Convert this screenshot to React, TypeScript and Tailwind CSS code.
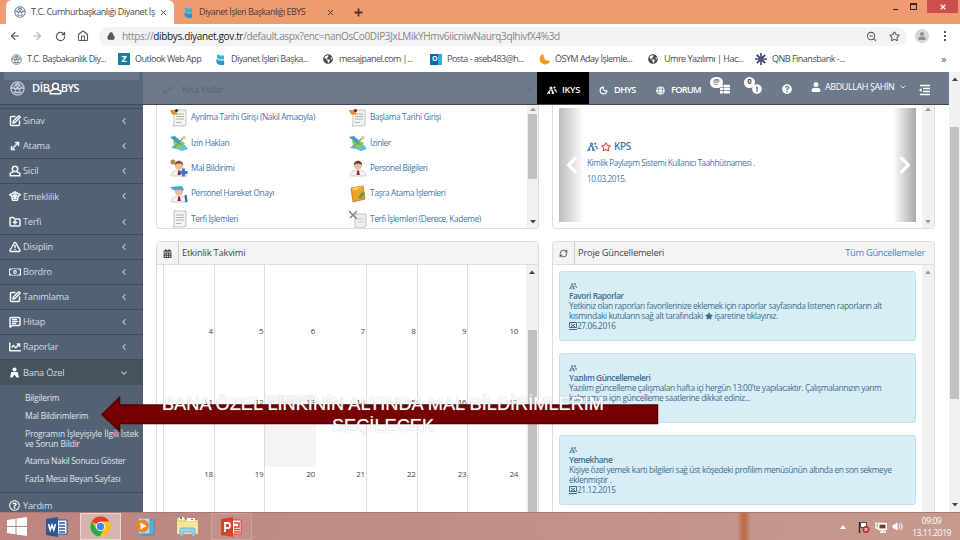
import type { ReactNode } from 'react';
import {
  ArrowLeft, ArrowRight, ChevronDown, ChevronLeft, FolderUp, House, Lock, MessageSquareText,
  Moon, MoveDiagonal, RefreshCw, RotateCw, SquarePen, Star, TriangleAlert, X, ZoomOut,
} from 'lucide-react';
import {
  FaCalendarAlt, FaChartLine, FaChevronLeft, FaChevronRight, FaExclamationCircle, FaGlobe,
  FaGlobeAmericas, FaQuestionCircle, FaRegMoneyBillAlt, FaRegQuestionCircle, FaStar, FaThList, FaUser,
} from 'react-icons/fa';

const line = { size: 12, strokeWidth: 3 };

/* ---------- icons ---------- */

function Emblem({ className = 'text-[#6d7f97]', size = 12 }: { className?: string; size?: number }) {
  return (
    <svg width={size} height={size} viewBox="0 0 24 24" fill="none" stroke="currentColor" className={`shrink-0 ${className}`}>
      <circle cx="12" cy="12" r="10.5" strokeWidth="2" />
      <path d="M2 11h5l2 3 3-4 3 4 2-3h5M6 17c3 2 9 2 12 0M8 7l4-3 4 3" strokeWidth="2.4" />
      <path d="M5 8h14" strokeWidth="1.5" />
    </svg>
  );
}

function Flag() {
  return (
    <svg width="9" height="11" viewBox="0 0 9 11" className="shrink-0">
      <path d="M1 0l2.6 1.6H8v3.8H3.6L1 4z" fill="#2fb4dc" />
      <path d="M0.5 5l3 1.4h4.6V11H3.5L0.5 9z" fill="#2796c9" />
    </svg>
  );
}

function People({ size = 10 }: { size?: number }) {
  return (
    <svg width={size} height={size} viewBox="0 0 20 20" fill="none" stroke="currentColor" strokeWidth="2.2" className="shrink-0">
      <circle cx="8" cy="6" r="2" />
      <path d="M1 18l5-8h4l4 8M5 14v4M10 11l1 7M15 3v4M13 5h4M14 10h3l2 5" />
    </svg>
  );
}

function Bust({ size = 12 }: { size?: number }) {
  return (
    <svg width={size} height={size} viewBox="0 0 20 20" fill="none" stroke="currentColor" strokeWidth="2.5">
      <circle cx="10" cy="6.5" r="4.5" />
      <path d="M7 11l-5 3v4h16v-4l-5-3" />
    </svg>
  );
}

function Person() {
  return (
    <svg width="11" height="11" viewBox="0 0 20 20" fill="currentColor">
      <circle cx="10" cy="4.5" r="3.7" />
      <path d="M4 9h12l2 10h-4l-4-5-4 5H2z" />
    </svg>
  );
}

function Basket() {
  return (
    <svg width="12" height="12" viewBox="0 0 20 20" fill="none" stroke="currentColor" strokeWidth="2.4">
      <path d="M1 8l9-5 9 5-9 4zM4 10l2 7h8l2-7M7 14h6" />
      <circle cx="10" cy="8" r="2" />
    </svg>
  );
}

function Triangle({ up, light }: { up?: boolean; light?: boolean }) {
  return (
    <svg width="6" height="4" viewBox="0 0 6 4" className={light ? 'text-[#9a9a9a]' : 'text-[#444]'}>
      <path d={up ? 'M0 4L3 0.4 6 4z' : 'M0 0L3 3.6 6 0z'} fill="currentColor" />
    </svg>
  );
}

function ChromeLogo() {
  return (
    <svg width="21" height="21" viewBox="0 0 24 24">
      <circle cx="12" cy="12" r="11.5" fill="#fbc116" />
      <path d="M12 12L2 6.2A11.5 11.5 0 0 1 22 6.4H12z" fill="#e33b2e" />
      <path d="M12 12L7.4 14.6 2 6.2A11.5 11.5 0 0 0 11 23.5l5-9z" fill="#2da94f" />
      <circle cx="12" cy="12" r="5.4" fill="#fff" />
      <circle cx="12" cy="12" r="4.3" fill="#4285f4" />
    </svg>
  );
}

type ShortcutArt = 'form' | 'map' | 'doctor' | 'man' | 'officer' | 'book' | 'paper' | 'tools';

function ShortcutIcon({ art }: { art: ShortcutArt }) {
  const paper = (
    <g>
      <path d="M4 1h12v15l-2 1H3l1-3z" fill="#f4f4f2" stroke="#b5b4b0" strokeWidth="0.8" />
      <path d="M6 5h8M6 7.5h8M6 10h8M6 13.500h5" stroke="#a9a9a6" strokeWidth="0.9" />
    </g>
  );
  const body = (hair: string) => (
    <g>
      <path d="M1 17c0-4 3-6 8-6s8 2 8 6z" fill="#f2f2f5" stroke="#b5b5bd" strokeWidth="0.6" />
      <path d="M8.2 11.5h1.8l.8 4.5H7.6z" fill="#a3202a" />
      <circle cx="9" cy="6.5" r="4" fill="#eebd97" />
      <path d="M4.8 6.5C4.5 0 13.5 0 13.2 6.5 12 3.8 6.5 3.8 4.8 6.5z" fill={hair} />
    </g>
  );
  return (
    <svg width="18" height="18" viewBox="0 0 18 18" className="shrink-0">
      {art === 'paper' && paper}
      {art === 'form' && (
        <g>
          {paper}
          <path d="M0 1h7v4.500H2z" fill="#ee8c2d" />
          <circle cx="6.5" cy="1.500" r="1.500" fill="#3b2b25" />
        </g>
      )}
      {art === 'tools' && (
        <g>
          <path d="M6 4h11v12l-2 2H6z" fill="#ececea" stroke="#b5b5b0" strokeWidth="0.8" />
          <path d="M0 1l8 8M8 1L1 8" stroke="#8d8978" strokeWidth="1.6" />
          <path d="M9 9h6M9 12h5" stroke="#c5c5c2" strokeWidth="0.8" />
        </g>
      )}
      {art === 'map' && (
        <g>
          <path d="M1 14l4-4 5-1 5 2 3 4-6 2-5-2z" fill="#62bfe2" />
          <path d="M3 7l4-3 4 3 4 2-3 4-5 1-3-3z" fill="#8fce46" />
          <path d="M0 3l5-1 3 3 4 6-4-1z" fill="#3f9ccb" />
          <path d="M14 3L4 14" stroke="#7f9c7a" strokeWidth="1.2" />
          <circle cx="14" cy="3.500" r="1.800" fill="#d9c9a2" />
        </g>
      )}
      {art === 'man' && body('#6a3d2a')}
      {art === 'doctor' && (
        <g>
          {body('#8a5433')}
          <circle cx="3" cy="3" r="2.5" fill="#a98b56" />
          <path d="M13.500 9.500v8M9.500 13.500h8" stroke="#3a73c8" strokeWidth="2.800" />
        </g>
      )}
      {art === 'officer' && (
        <g>
          {body('#4aa6cf')}
          <path d="M0 2l12-1 2 4H3z" fill="#4aa6cf" />
          <path d="M15.500 10l1 7" stroke="#2c6483" strokeWidth="2" />
        </g>
      )}
      {art === 'book' && (
        <g>
          <path d="M2 3l12-2 2 13-12 3z" fill="#eda526" stroke="#b86f18" strokeWidth="0.8" />
          <path d="M2 3l4 3 8-5" fill="#f7cc58" />
          <path d="M9 13l4-6 3 1-4 6z" fill="#6f9a37" />
        </g>
      )}
    </svg>
  );
}

/* ---------- browser chrome ---------- */

function BrowserTabs() {
  return (
    <div className="flex h-6 shrink-0 bg-[#f09a72] pl-1.5 text-[9px] tracking-[-0.53px] text-[#4a3b3b]">
      <div className="flex w-[168px] items-center rounded-t-md bg-white pl-2">
        <Emblem />
        <span className="ml-[5px] w-[124px] whitespace-nowrap tracking-[-0.42px] text-[#45484d]">
          T.C. Cumhurbaşkanlığı Diyanet İş
        </span>
        <X size={9} strokeWidth={2.5} className="ml-1 text-[#444]" />
      </div>
      <div className="flex w-[168px] items-center pl-2.5">
        <Flag />
        <span className="ml-1.5 w-[127px] whitespace-nowrap">Diyanet İşleri Başkanlığı EBYS</span>
        <X size={9} strokeWidth={2.5} />
      </div>
      <span className="flex w-8 items-center pl-[12px]">
        <svg width="9" height="9" viewBox="0 0 9 9" stroke="#4b3531" strokeWidth="1.8"><path d="M4.5 0.5v8M0.5 4.5h8" /></svg>
      </span>
      <div className="ml-auto mr-0.5 flex h-[13px] items-center">
        <span className="mr-3 mt-1.5 h-[1.5px] w-[5px] bg-[#3d241c]" />
        <span className="mr-2.5 h-[7px] w-[7px] border border-t-2 border-[#3d241c]" />
        <span className="flex h-full w-[31px] items-center justify-center bg-[#cb4f4c]">
          <X size={8} strokeWidth={3.5} color="white" />
        </span>
      </div>
    </div>
  );
}

function AddressBar() {
  return (
    <div className="flex h-6 shrink-0 items-center bg-white pl-[9px] text-[#55585c]">
      <ArrowLeft size={12} strokeWidth={2.3} />
      <ArrowRight size={12} strokeWidth={2.3} className="ml-2.5 text-[#b4b6b8]" />
      <RotateCw size={11} strokeWidth={2.6} className="ml-3" />
      <House size={12} strokeWidth={2.2} className="ml-[11px]" />
      <div className="ml-2.5 flex h-[19px] w-[808px] items-center rounded-full bg-[#f1f3f4] pl-2">
        <Lock size={8} strokeWidth={3} fill="currentColor" />
        <span className="ml-[7px] whitespace-nowrap text-[10px] tracking-[-0.35px] text-[#80868b]">
          https://<span className="text-[#202124]">dibbys.diyanet.gov.tr</span>
          /default.aspx?enc=nanOsCo0DIP3JxLMikYHmv6iicniwNaurq3qlhivfX4%3d
        </span>
        <ZoomOut size={11} strokeWidth={2.2} className="ml-auto" />
        <Star size={11} strokeWidth={2.2} className="ml-3 mr-[7px]" />
      </div>
      <span className="ml-2 flex h-3.5 w-3.5 items-center justify-center rounded-full bg-[#d5d6d8] text-[#8d8f92]">
        <FaUser size={8} />
      </span>
      <span className="ml-[15px] flex flex-col gap-[2px]">
        <i className="h-0.5 w-0.5 bg-[#555]" /><i className="h-0.5 w-0.5 bg-[#555]" /><i className="h-0.5 w-0.5 bg-[#555]" />
      </span>
    </div>
  );
}

function Bookmark({ icon, label, className }: { icon: ReactNode; label: string; className: string }) {
  return (
    <div className={`flex shrink-0 items-center gap-[5px] whitespace-nowrap ${className}`}>
      <span className="flex w-3 shrink-0 justify-center tracking-normal">{icon}</span>
      {label}
    </div>
  );
}

function Bookmarks() {
  return (
    <div className="flex h-6 shrink-0 items-center bg-white pb-[2px] pl-2.5 text-[9px] tracking-[-0.5px] text-[#4a4d52]">
      <Bookmark className="w-[108px]" icon={<Emblem size={11} />} label="T.C. Başbakanlık Diy..." />
      <Bookmark
        className="w-[96px]"
        icon={<span className="flex h-3 w-3 items-center justify-center bg-[#1a7f9c] text-[9px] font-bold text-white">Z</span>}
        label="Outlook Web App"
      />
      <Bookmark className="w-[108px]" icon={<Flag />} label="Diyanet İşleri Başka..." />
      <Bookmark className="w-[108px]" icon={<FaGlobeAmericas size={10} />} label="mesajpanel.com |..." />
      <Bookmark
        className="w-[108px]"
        icon={<span className="flex h-[11px] w-3 items-center border-r-4 border-[#36a9e6] bg-[#0f66b8] pl-0.5 text-[7px] font-bold text-white">O</span>}
        label="Posta - aseb483@h..."
      />
      <Bookmark
        className="w-[109px]"
        icon={<svg width="11" height="11" viewBox="0 0 11 11"><path d="M4 0a5.4 5.4 0 1 0 7 7L6 6z" fill="#f49b1b" /></svg>}
        label="ÖSYM Aday İşlemle..."
      />
      <Bookmark className="w-[108px]" icon={<FaGlobeAmericas size={10} />} label="Umre Yazılımı | Hac..." />
      <Bookmark
        className="w-[120px]"
        icon={
          <svg width="12" height="12" viewBox="0 0 12 12" strokeWidth="1.7">
            <path d="M6 0v12M0 6h12" stroke="#2b5c91" /><path d="M1.8 1.8l8.4 8.4M10.2 1.8l-8.4 8.4" stroke="#3a3a70" />
            <circle cx="6" cy="6" r="1.5" fill="#b83b63" />
          </svg>
        }
        label="QNB Finansbank -..."
      />
      <span className="ml-auto mr-3.5 text-[11px]">»</span>
    </div>
  );
}

/* ---------- application ---------- */

const menu: { label: string; icon: ReactNode; border?: boolean }[] = [
  { label: 'Sınav', icon: <SquarePen {...line} /> },
  { label: 'Atama', icon: <MoveDiagonal {...line} />, border: true },
  { label: 'Sicil', icon: <Bust />, border: true },
  { label: 'Emeklilik', icon: <Basket /> },
  { label: 'Terfi', icon: <FolderUp {...line} />, border: true },
  { label: 'Disiplin', icon: <TriangleAlert {...line} />, border: true },
  { label: 'Bordro', icon: <FaRegMoneyBillAlt size={12} />, border: true },
  { label: 'Tanımlama', icon: <SquarePen {...line} />, border: true },
  { label: 'Hitap', icon: <MessageSquareText {...line} />, border: true },
  { label: 'Raporlar', icon: <FaChartLine size={12} />, border: true },
];

function Sidebar() {
  return (
    <aside className="flex w-[143px] shrink-0 flex-col overflow-hidden bg-[#536273] pt-[3px] text-[9.2px] tracking-[-0.2px] text-[#d5dbe1]">
      <div className="border-t border-[#3f4b58]">
        {menu.map((item) => (
          <div
            key={item.label}
            className={`flex h-[25.15px] items-center border-b pl-[9px] pr-[14px] ${item.border ? 'border-[#3f4b58]' : 'border-transparent'}`}
          >
            <span className="w-3.5 text-[#f4f7f9]">{item.icon}</span>
            <span className="flex-1">{item.label}</span>
            <ChevronLeft size={10} strokeWidth={2.5} />
          </div>
        ))}
        <div className="flex h-[25px] items-center bg-[#47525f] pl-[9px] pr-[14px]">
          <span className="w-3.5 text-white"><Person /></span>
          <span className="flex-1">Bana Özel</span>
          <ChevronDown size={10} strokeWidth={2.5} />
        </div>
      </div>
      <ul className="h-[108px] shrink-0 border-b border-[#3f4b58] pl-[25px] pt-2 text-[8.4px] leading-[10px] text-[#e0e5ea]">
        <li className="mb-[7.7px]">Bilgilerim</li>
        <li className="mb-[7.7px]">Mal Bildirimlerim</li>
        <li className="mb-[7.7px] whitespace-nowrap tracking-[-0.13px]">Programın İşleyişiyle İlgili İstek<br />ve Sorun Bildir</li>
        <li className="mb-[7.7px] whitespace-nowrap tracking-[-0.25px]">Atama Nakil Sonucu Göster</li>
        <li>Fazla Mesai Beyan Sayfası</li>
      </ul>
      <div className="flex h-6 shrink-0 items-center pl-[9px]">
        <span className="w-3.5 text-white"><FaRegQuestionCircle size={11} /></span>
        Yardım
      </div>
    </aside>
  );
}

function Navbar() {
  return (
    <header className="flex h-[33px] shrink-0 border-b border-[#3d4855] bg-[#6c7a8a] text-white">
      <div className="relative flex w-[143px] items-center bg-[#596879] pl-2.5">
        <div className="absolute left-1 right-1 top-0 h-2 bg-[#677688]" />
        <Emblem size={15} className="text-[#cbd4dd]" />
        <span className="ml-[7px] text-[11px] font-semibold tracking-[-0.3px]">DİB</span>
        <span className="-ml-px -mr-px"><Bust size={13} /></span>
        <span className="text-[11px] font-semibold tracking-[-0.6px]">BYS</span>
      </div>
      <div className="flex w-[394px] items-center pl-5 pt-1 text-[9.2px] tracking-[-0.2px] text-[#596675]">
        <svg width="9" height="9" viewBox="0 0 9 9" fill="none" stroke="currentColor"><path d="M1 8l7-7M2 4L0.5 6.5 3 8.5M7 5l1.5-2.5L6 0.5" /></svg>
        <span className="ml-2.5">Kısa Yollar</span>
        <span className="ml-auto mr-[5px]">+</span>
      </div>
      <nav className="flex text-[9.2px]">
        <div className="flex w-[52px] items-center gap-[5px] bg-black pl-2.5 pt-1 font-semibold tracking-[-0.3px]"><People />IKYS</div>
        <div className="flex w-[57px] items-center gap-1.5 pl-2.5 pt-1 font-semibold tracking-[-0.6px]"><Moon size={9} strokeWidth={3} />DHYS</div>
        <div className="flex w-[65px] items-center gap-1.5 pl-2.5 pt-1 font-semibold tracking-[-0.7px]"><FaGlobe size={9} />FORUM</div>
      </nav>
      <div className="relative w-[36px] pl-[9px] pt-3">
        <FaThList size={10} />
        <span className="absolute -left-px top-[5px] flex h-[11px] w-[13px] items-center justify-center rounded-full bg-white text-[7px] text-[#333]">@</span>
      </div>
      <div className="relative w-[35px] pl-[5px] pt-3">
        <FaExclamationCircle size={10} />
        <span className="absolute -left-[3px] top-[5px] flex h-[11px] w-[11px] items-center justify-center rounded-full bg-white text-[7px] font-bold text-[#333]">0</span>
      </div>
      <div className="w-[29px] pt-3"><FaQuestionCircle size={10} /></div>
      <div className="flex h-[29px] w-[107px] items-center whitespace-nowrap text-[9px] tracking-[-0.42px]">
        <FaUser size={10} />
        <span className="ml-1">ABDULLAH ŞAHİN</span>
        <ChevronDown size={8} strokeWidth={2.5} className="ml-[5px]" />
      </div>
      <svg width="12" height="12" viewBox="0 0 12 12" stroke="white" strokeWidth="1.5" className="ml-px mt-3">
        <path d="M1 1.5h10M4 4.5h7M4 7.5h7M1 10.5h10" /><path d="M0 6l2.5-2v4z" fill="white" stroke="none" />
      </svg>
    </header>
  );
}

const shortcuts: [ShortcutArt, string, ShortcutArt, string][] = [
  ['form', 'Ayrılma Tarihi Girişi (Nakil Amacıyla)', 'form', 'Başlama Tarihi Girişi'],
  ['map', 'İzin Hakları', 'map', 'İzinler'],
  ['doctor', 'Mal Bildirimi', 'man', 'Personel Bilgileri'],
  ['officer', 'Personel Hareket Onayı', 'book', 'Taşra Atama İşlemleri'],
  ['paper', 'Terfi İşlemleri', 'tools', 'Terfi İşlemleri (Derece, Kademe)'],
];

function Shortcuts() {
  return (
    <section className="flex h-[124px] overflow-hidden rounded-b border border-t-0 border-[#ddd]">
      <div className="flex-1 pl-[13px] text-[8.3px] tracking-[-0.38px] text-[#4078ad]">
        {shortcuts.map(([leftArt, left, rightArt, right]) => (
          <div key={left} className="flex h-[25.3px] items-center whitespace-nowrap">
            <div className="flex w-[179px] items-center gap-[3px]"><ShortcutIcon art={leftArt} />{left}</div>
            <div className="flex items-center gap-[3px]"><ShortcutIcon art={rightArt} />{right}</div>
          </div>
        ))}
      </div>
      <div className="flex w-[11px] flex-col items-center bg-[#f1f1f1] pb-1 pt-0.5">
        <Triangle up light />
        <div className="mt-[3px] h-[65px] w-[9px] bg-[#c1c1c1]" />
        <div className="mt-auto"><Triangle /></div>
      </div>
    </section>
  );
}

function PanelHeader({ icon, title, action }: { icon: ReactNode; title: string; action?: string }) {
  return (
    <div className="flex h-[23px] shrink-0 items-center border-b border-[#ddd] bg-[#f4f4f4] text-[9.3px] tracking-[-0.2px] text-[#444]">
      <span className="flex h-full w-[22px] items-center justify-center border-r border-[#ccc]">{icon}</span>
      <span className="ml-[3px]">{title}</span>
      {action && <span className="ml-auto mr-[9px] tracking-[-0.3px] text-[#4a86b8]">{action}</span>}
    </div>
  );
}

const weeks = [
  [4, 5, 6, 7, 8, 9, 10],
  [11, 12, 13, 14, 15, 16, 17],
  [18, 19, 20, 21, 22, 23, 24],
];

function Calendar() {
  return (
    <section className="flex min-h-0 flex-1 flex-col rounded-t border border-b-0 border-[#ddd]">
      <PanelHeader title="Etkinlik Takvimi" icon={<FaCalendarAlt size={9} />} />
      <div className="flex min-h-0 flex-1">
        <div className="ml-1.5 grid w-[356px] grid-cols-7 overflow-hidden border-l border-[#ddd] text-right text-[8px] tracking-[-0.3px] text-[#444]">
          {weeks[0].map((_, col) => (
            <div key={col} className={`w-[50.7px] ${col === 2 || col === 6 ? '' : 'border-r border-[#ddd]'}`}>
              <div className="h-[59px]" />
              {weeks.map((week) => (
                <div key={week[col]} className={`h-[71.3px] pr-px leading-[14px] ${week[col] === 13 ? 'bg-[#f4f4f4]' : ''}`}>
                  {week[col]}
                </div>
              ))}
            </div>
          ))}
        </div>
        <div className="ml-auto flex w-[12px] flex-col items-center bg-[#f1f1f1] pt-[5px]">
          <Triangle up />
          <div className="mt-[56px] w-[9px] flex-1 bg-[#c1c1c1]" />
        </div>
      </div>
    </section>
  );
}

function Kps() {
  return (
    <section className="flex h-[124px] rounded-b border border-t-0 border-[#ddd]">
      <div className="ml-1.5 mt-[3px] flex h-[114px] w-[357px]">
        <div className="flex w-[25px] items-center justify-center bg-linear-to-r from-[#bdbdbd] to-white text-white">
          <FaChevronLeft size={20} />
        </div>
        <div className="flex-1 pl-[3px] pt-[31px] text-[8.2px] tracking-[-0.42px] text-[#4078ad]">
          <div className="flex items-center gap-[3px] text-[10px]">
            <People size={11} /><Star size={10} strokeWidth={2.5} className="text-[#e2474a]" />
            <span className="font-semibold">KPS</span>
          </div>
          <p className="mt-[3px] whitespace-nowrap leading-3">Kimlik Paylaşım Sistemi Kullanıcı Taahhütnamesi .</p>
          <p className="mt-1 leading-3">10.03.2015.</p>
        </div>
        <div className="flex w-[23px] items-center justify-center bg-linear-to-l from-[#a9a9a9] to-white text-white">
          <FaChevronRight size={20} />
        </div>
      </div>
      <div className="ml-auto flex w-[12px] flex-col items-center justify-between bg-[#f1f1f1] pb-1 pt-0.5">
        <Triangle up light /><Triangle light />
      </div>
    </section>
  );
}

function Notice({ title, lines, date }: { title: string; lines: ReactNode[]; date?: string }) {
  return (
    <div className="h-[69.5px] shrink-0 whitespace-nowrap rounded-[3px] border border-[#c0e2ec] bg-[#d9edf7] pl-[9px] pt-[9px] text-[8.3px] leading-[10px] tracking-[-0.38px] text-[#3b6d8c]">
      <div className="flex h-[10px] items-center"><People size={8} /></div>
      <div className="font-semibold tracking-[-0.45px]">{title}</div>
      {lines.map((text, i) => <div key={i}>{text}</div>)}
      {date && (
        <div className="flex items-center">
          <svg width="8" height="8" viewBox="0 0 8 8" fill="none" stroke="currentColor"><path d="M.5.5h7v5h-7zM0 7.5h8M2 2l4 3M6 2L2 5" /></svg>
          {date}
        </div>
      )}
    </div>
  );
}

function Updates() {
  return (
    <section className="flex min-h-0 flex-1 flex-col overflow-hidden rounded-t border border-b-0 border-[#ddd]">
      <PanelHeader title="Proje Güncellemeleri" action="Tüm Güncellemeler" icon={<RefreshCw size={9} strokeWidth={2.3} />} />
      <div className="flex min-h-0 flex-1">
        <div className="ml-1.5 flex w-[357px] flex-col gap-[12.5px] pt-1.5">
          <Notice
            title="Favori Raporlar"
            lines={[
              'Yetkiniz olan raporları favorilerinize eklemek için raporlar sayfasında listenen raporların alt',
              <>kısmındaki kutuların sağ alt tarafındaki <FaStar size={8} className="inline align-[-1px]" /> işaretine tıklayınız.</>,
            ]}
            date="27.06.2016"
          />
          <Notice
            title="Yazılım Güncellemeleri"
            lines={[
              "Yazılım güncelleme çalışmaları hafta içi hergün 13:00'te yapılacaktır. Çalışmalarınızın yarım",
              'kalmaması için güncelleme saatlerine dikkat ediniz...',
            ]}
          />
          <Notice
            title="Yemekhane"
            lines={['Kişiye özel yemek kartı bilgileri sağ üst köşedeki profilim menüsünün altında en son sekmeye', 'eklenmiştir .']}
            date="21.12.2015"
          />
        </div>
        <div className="ml-auto flex w-[12px] flex-col items-center bg-[#f1f1f1] pt-[5px]"><Triangle up light /></div>
      </div>
    </section>
  );
}

function Callout() {
  return (
    <div className="absolute left-[101px] top-[395px] h-[44px] w-[558px]">
      <svg width="558" height="38" viewBox="0 0 558 38" className="absolute left-0 top-0">
        <path d="M1 19.5L18.5 2.5v7.500H556.500v18.500H18.500v7.500z" fill="#760000" stroke="#560000" strokeWidth="1.5" />
      </svg>
      <p className="relative -top-px ml-[32px] w-[500px] whitespace-nowrap text-center font-['Liberation_Sans',Arial,sans-serif] text-[18.2px] leading-[21.5px] text-white [text-shadow:0_0_1px_#aaa]">
        BANA ÖZEL LİNKİNİN ALTINDA MAL BİLDİRİMLERİM<br />SEÇİLECEK
      </p>
    </div>
  );
}

function Taskbar() {
  return (
    <footer className="flex h-7 shrink-0 items-center border-t border-[#a87a74] bg-linear-to-r from-[#bd8580] via-[#c18f87] to-[#c79a8e] text-white">
      <svg width="20" height="19" viewBox="0 0 20 19" fill="white" className="ml-[7px]">
        <path d="M0 3l8.5-1.2v7.2H0zM9.5 1.6L20 0v9H9.5zM0 10h8.5v7.2L0 16zM9.5 10H20v9L9.5 17.4z" />
      </svg>
      <svg width="22" height="20" viewBox="0 0 22 20" className="ml-[19px]">
        <path d="M11 3h10v14H11z" fill="white" stroke="#2b579a" />
        <path d="M13 6h6M13 9h6M13 12h6M13 15h6" stroke="#2b579a" strokeWidth="1.3" />
        <path d="M0 2l12-2v20L0 18z" fill="#2b579a" />
        <path d="M2.5 7l1.7 6L6 8l1.8 5 1.7-6" fill="none" stroke="white" strokeWidth="1.5" />
      </svg>
      <span className="ml-[12px] flex h-full w-[41px] items-center justify-center border border-[#ecd7d3] bg-[#d7b4ae]"><ChromeLogo /></span>
      <svg width="20" height="18" viewBox="0 0 20 18" className="ml-[14px]">
        <path d="M7 2h12v15H7z" fill="#5fb3d7" stroke="#3d8db8" /><path d="M3 0h12v16H3z" fill="#b3dced" stroke="#5695b6" />
        <circle cx="7.5" cy="8" r="6.5" fill="#ee8424" /><path d="M5.5 4.5l6 3.5-6 3.5z" fill="white" />
      </svg>
      <svg width="23" height="21" viewBox="0 0 23 21" className="ml-[21px]">
        <path d="M1 2h7l2 2h12v14H1z" fill="#efd67b" /><path d="M3 1h5v3H3zM11 2h8v3h-8z" fill="#fff" /><path d="M4 1h2v2H4z" fill="#3da25b" /><path d="M15 3h2v1h-2z" fill="#d44" />
        <path d="M1 6h21v12H1z" fill="#f6e59b" />
        <path d="M4 20v-6q0-2 2-2h11q2 0 2 2v6h-3v-4H7v4z" fill="#9ed4ea" stroke="#5fa9c9" strokeWidth="0.8" />
      </svg>
      <span className="ml-[12px] flex h-full w-[41px] items-center justify-center border border-[#cfa29c] bg-[#c4908a]">
        <svg width="21" height="20" viewBox="0 0 21 20">
          <path d="M10 3h10v14H10z" fill="white" stroke="#d24726" /><path d="M13 6h5v4h-5M13 12.5h6M13 15h6" fill="none" stroke="#d24726" strokeWidth="1.5" />
          <path d="M0 2l12-2v20L0 18z" fill="#d24726" />
          <path d="M4 15V6h3q2 0 2 2.5T7 11H4" fill="none" stroke="white" strokeWidth="1.8" />
        </svg>
      </span>
      <span className="ml-[485px] h-full w-3.5 bg-linear-to-r from-transparent via-[#bd6740] to-transparent" />
      <div className="ml-auto mr-[9px] flex items-center">
        <svg width="6" height="4" viewBox="0 0 6 4" className="mr-3"><path d="M0 4l3-4 3 4z" fill="white" /></svg>
        <svg width="12" height="12" viewBox="0 0 12 12" className="mr-[5px]">
          <path d="M1.5 1v11" stroke="#3e2e2e" strokeWidth="1.5" /><path d="M2.5 1.5h6v5h-6z" fill="white" stroke="#54403e" />
          <circle cx="8" cy="8.5" r="3.500" fill="#c62f2f" /><path d="M6.5 7l3 3M9.5 7l-3 3" stroke="white" />
        </svg>
        <svg width="12" height="12" viewBox="0 0 12 12" className="mr-[5px]" fill="none" stroke="white">
          <path d="M3.5 2.5h8v6h-8zM5 11h6M1 1v6h3M7.5 9v2" strokeWidth="1.3" /><path d="M5 4h5v3H5z" fill="#5b4340" stroke="none" />
        </svg>
        <svg width="11" height="11" viewBox="0 0 11 11" className="mr-[9px]" fill="none" stroke="white">
          <path d="M1 4h1.5L5 2v7L2.5 7H1z" fill="white" /><path d="M7 3q2 2.5 0 5M8.5 1.5q3.5 4 0 8" />
        </svg>
        <div className="text-center text-[8.5px] leading-[12px] tracking-[-0.45px]">09:09<br />13.11.2019</div>
      </div>
    </footer>
  );
}

export default function App() {
  return (
    <div className="relative flex h-[540px] w-[960px] flex-col overflow-hidden bg-white font-['Open_Sans','Noto_Sans',sans-serif]">
      <BrowserTabs />
      <AddressBar />
      <Bookmarks />
      <div className="flex min-h-0 flex-1">
        <div className="flex w-[949px] flex-col">
          <Navbar />
          <div className="flex min-h-0 flex-1">
            <Sidebar />
            <main className="flex flex-1 gap-[13px] pl-[13px]">
              <div className="flex w-[383px] flex-col gap-3"><Shortcuts /><Calendar /></div>
              <div className="flex w-[383px] flex-col gap-3"><Kps /><Updates /></div>
            </main>
          </div>
        </div>
        <div className="flex w-[11px] flex-col items-center bg-[#f1f1f1] py-[5px]">
          <Triangle up />
          <div className="mt-[46px] h-[272px] w-[9px] bg-[#c1c1c1]" />
          <div className="mt-auto"><Triangle /></div>
        </div>
      </div>
      <Callout />
      <Taskbar />
    </div>
  );
}
